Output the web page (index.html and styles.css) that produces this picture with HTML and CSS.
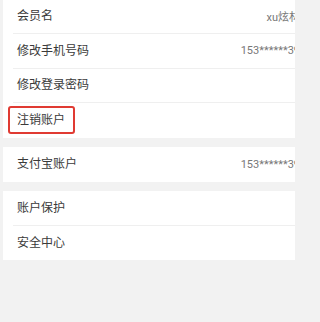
FILE: index.html
```html
<!DOCTYPE html>
<html lang="zh-CN">
<head>
<meta charset="utf-8">
<title>账户设置</title>
<link rel="stylesheet" href="styles.css">
</head>
<body>
<div class="page">
  <section class="group group-first">
    <div class="row"><span class="label">会员名</span><span class="value">xu炫林</span></div>
    <div class="row"><span class="label">修改手机号码</span><span class="value">153******39</span></div>
    <div class="row"><span class="label">修改登录密码</span></div>
    <div class="row"><span class="label marked">注销账户</span></div>
  </section>
  <section class="group">
    <div class="row"><span class="label">支付宝账户</span><span class="value">153******39</span></div>
  </section>
  <section class="group">
    <div class="row"><span class="label">账户保护</span></div>
    <div class="row"><span class="label">安全中心</span></div>
  </section>
</div>
</body>
</html>
```

FILE: styles.css
```css
html, body {
  margin: 0;
  padding: 0;
  background: #f2f2f2;
}
body {
  font-family: Roboto, "Noto Sans CJK SC", sans-serif;
  width: 297px;
  height: 322px;
  overflow: hidden;
}
.page {
  display: flex;
  flex-direction: column;
  gap: 9.5px;
  margin-top: -0.5px;
  margin-left: 3px;
  width: 292px;
}
.group {
  background: #fff;
  overflow: hidden;
}
.row {
  box-sizing: border-box;
  height: 34.5px;
  margin-left: 10px;
  padding-left: 4px;
  border-bottom: 1px solid #efefef;
  display: flex;
  align-items: center;
  justify-content: space-between;
}
.row:last-child {
  border-bottom: none;
}
.label {
  font-size: 12px;
  line-height: 12px;
  color: #3a3a3a;
}
.value {
  font-size: 11px;
  color: #777;
  margin-right: -5px;
  white-space: nowrap;
}
.marked {
  position: relative;
  display: inline-block;
}
.marked::after {
  content: "";
  position: absolute;
  left: -9px;
  right: -10px;
  top: -8px;
  bottom: -8px;
  border: 2px solid #e03a32;
  border-radius: 3px;
}
```
